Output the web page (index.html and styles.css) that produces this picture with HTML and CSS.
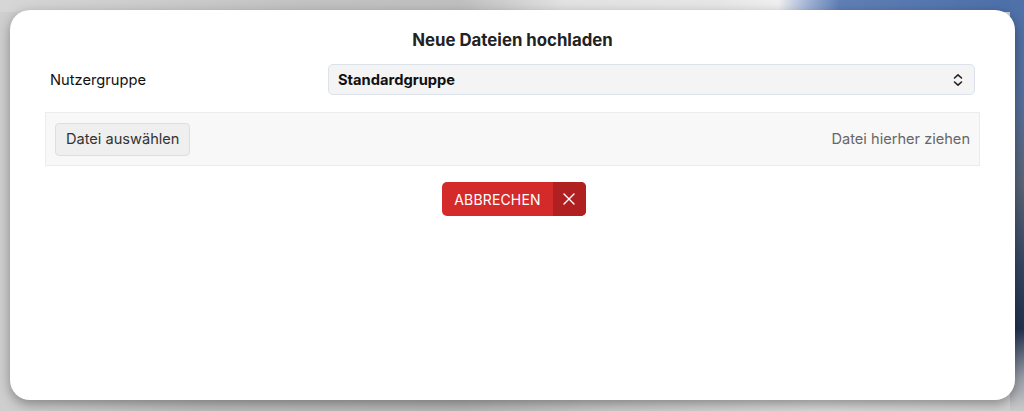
FILE: index.html
```html
<!DOCTYPE html>
<html lang="de">
<head>
<meta charset="utf-8">
<title>Neue Dateien hochladen</title>
<link rel="stylesheet" href="styles.css">
</head>
<body>
<div class="backdrop">
  <div class="modal">
    <h1 class="title">Neue Dateien hochladen</h1>
    <div class="row">
      <label class="label">Nutzergruppe</label>
      <div class="select">
        <span class="select-text">Standardgruppe</span>
        <svg class="chev" width="10" height="14" viewBox="0 0 10 14"><path d="M1.5 5 L5 1.8 L8.5 5 M1.5 9 L5 12.2 L8.5 9" fill="none" stroke="#222" stroke-width="1.6" stroke-linecap="round" stroke-linejoin="round"/></svg>
      </div>
    </div>
    <div class="drop">
      <button class="pick">Datei auswählen</button>
      <span class="hint">Datei hierher ziehen</span>
    </div>
    <div class="actions">
      <button class="cancel"><span class="cancel-text">ABBRECHEN</span><span class="cancel-x"><svg width="14" height="14" viewBox="0 0 14 14"><path d="M2 2 L12 12 M12 2 L2 12" stroke="#fff" stroke-width="1.4" stroke-linecap="round"/></svg></span></button>
    </div>
  </div>
</div>
</body>
</html>
```
FILE: styles.css
```css
html, body {
  margin: 0;
  padding: 0;
  height: 100%;
}
body {
  font-family: Inter, "Noto Sans", sans-serif;
  background: linear-gradient(90deg, #cfcfcf 0%, #bdbdbd 20%, #b8b8b8 45%, #c9c9c9 60%, #d8d8d8 80%, #cfcfcf 100%);
  overflow: hidden;
}
.backdrop {
  height: 411px;
  padding: 10px 9px 11px 10px;
  box-sizing: border-box;
  position: relative;
}
.backdrop::before {
  content: "";
  position: absolute;
  left: 0;
  top: 0;
  width: 1024px;
  height: 12px;
  background: linear-gradient(90deg, #d6d6d6 0%, #c2c2c2 30%, #bfbfbf 45%, #e2e2e2 55%, #e6e6e6 70%, #efefef 76%, #9fb2d4 79%, #5f7fb5 82%, #4c6ea8 100%);
}
.backdrop::after {
  content: "";
  position: absolute;
  right: 0;
  top: 0;
  width: 14px;
  height: 411px;
  background: linear-gradient(180deg, #4f70aa 0%, #55709c 25%, #5a6478 45%, #344563 65%, #223150 80%, #9aa0aa 92%, #c9c9c9 100%);
}
.modal {
  position: relative;
  z-index: 1;
  height: 100%;
  background: #fff;
  border-radius: 20px;
  box-shadow: 0 4px 12px rgba(0,0,0,0.35);
  padding: 19px 35px 0 35px;
  box-sizing: border-box;
}
.title {
  margin: 0;
  text-align: center;
  font-size: 16.8px;
  font-weight: 700;
  color: #222;
  line-height: 22px;
}
.row {
  display: grid;
  grid-template-columns: 283px 1fr;
  align-items: center;
  margin-top: 13px;
  padding-right: 5px;
}
.label {
  font-size: 14.7px;
  color: #111;
  padding-left: 5px;
}
.select {
  height: 31px;
  box-sizing: border-box;
  background: #f4f4f5;
  border: 1px solid #dbe2ea;
  border-radius: 5px;
  display: flex;
  align-items: center;
  justify-content: space-between;
  padding: 0 11px 0 9px;
}
.select-text {
  font-size: 14.7px;
  font-weight: 700;
  color: #111;
}
.drop {
  margin-top: 17px;
  height: 54px;
  box-sizing: border-box;
  background: #f8f8f8;
  border: 1px solid #ececec;
  display: flex;
  align-items: center;
  justify-content: space-between;
  padding: 0 9px;
}
.pick {
  font-family: inherit;
  font-size: 14.6px;
  color: #333;
  background: #efefef;
  border: 1px solid #dedede;
  border-radius: 4px;
  height: 33px;
  padding: 0 10px;
}
.hint {
  font-size: 14.6px;
  color: #666;
}
.actions {
  display: flex;
  justify-content: center;
  margin-top: 16px;
}
.cancel {
  display: flex;
  padding: 0;
  border: none;
  border-radius: 5px;
  overflow: hidden;
  height: 34px;
  font-family: inherit;
  background: #d42a2a;
  margin-left: 3px;
}
.cancel-text {
  color: #fff;
  font-size: 14px;
  padding: 0 12px 0 12px;
  display: flex;
  align-items: center;
  letter-spacing: 0.15px;
}
.cancel-x {
  background: #b02020;
  width: 33px;
  display: flex;
  align-items: center;
  justify-content: center;
}
```
